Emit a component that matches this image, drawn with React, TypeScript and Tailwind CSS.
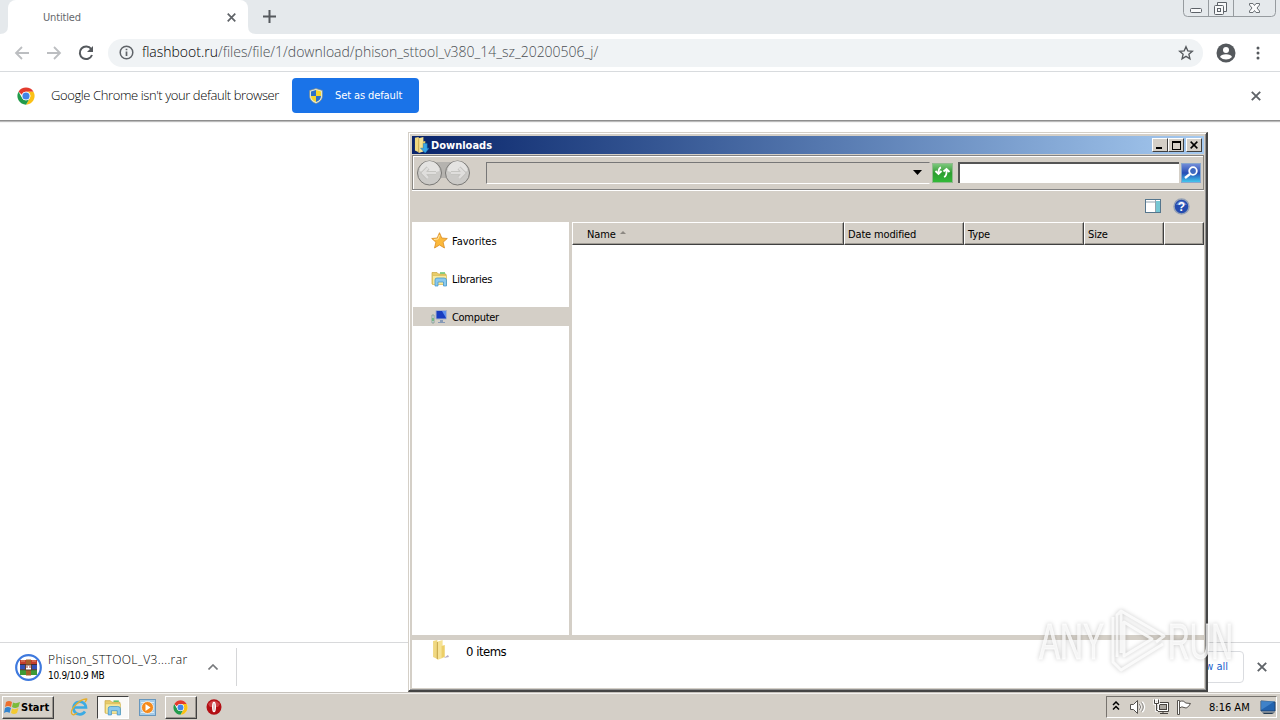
import React from "react";

const ui = "font-['DejaVu_Sans_Condensed','DejaVu_Sans',sans-serif] [font-stretch:condensed]";
const raised = "border border-t-white border-l-white border-r-[#404040] border-b-[#404040] bg-[#d4cfc7]";

function Cross({ size = 10, color = "#5f6368", w = 1.8 }: { size?: number; color?: string; w?: number }) {
  return (
    <svg width={size} height={size} viewBox="0 0 10 10" stroke={color} strokeWidth={w} className="block shrink-0">
      <path d="M.8.8 9.2 9.2M9.2.8.8 9.2" />
    </svg>
  );
}

function ChromeLogo({ size }: { size: number }) {
  return (
    <svg width={size} height={size} viewBox="0 0 48 48" className="block shrink-0">
      <circle cx="24" cy="24" r="23" fill="#fff" />
      <path d="M4.1 12.5A23 23 0 0 1 43.9 12.5H24A11.5 11.5 0 0 0 13.1 20.5Z" fill="#e33b2e" />
      <path d="M43.9 12.5A23 23 0 0 1 24 47L34 29.8A11.5 11.5 0 0 0 24 12.5Z" fill="#fbc116" />
      <path d="M4.1 12.5 14 29.8A11.5 11.5 0 0 0 34 29.8L24 47A23 23 0 0 1 4.1 12.5Z" fill="#229b4b" />
      <circle cx="24" cy="24" r="11.5" fill="#fff" />
      <circle cx="24" cy="24" r="9.5" fill="#4285e8" />
    </svg>
  );
}

function Shield() {
  return (
    <svg width="14" height="16" viewBox="0 0 14 16" className="block shrink-0">
      <path d="M7 .5 13.4 2.5V8C13.4 12 10 14.5 7 15.6 4 14.5.6 12 .6 8V2.5Z" fill="#e8ecd8" stroke="#7f8b86" strokeWidth=".7" />
      <path d="M7 2V8H2V3.4Z" fill="#2d70c9" />
      <path d="M7 2V8H12V3.4Z" fill="#f7d52c" />
      <path d="M2 8H7V14C4 12.7 2 11 2 8Z" fill="#f7d52c" />
      <path d="M12 8H7V14C10 12.7 12 11 12 8Z" fill="#2d70c9" />
    </svg>
  );
}

function Libraries({ size }: { size: number }) {
  return (
    <svg width={size} height={size} viewBox="0 0 17 17" className="block shrink-0">
      <path d="M1 2.5H6L7.5 4H15V14H1Z" fill="#e9cc6a" stroke="#c9a640" strokeWidth=".7" />
      <path d="M1.5 5.5H15.5V14.5H1.5Z" fill="#f8e99d" stroke="#d4b751" strokeWidth=".6" />
      <path d="M9 3H14" stroke="#5bbf61" strokeWidth="1.4" />
      <path d="M4 16V10Q4 8 6 8H13Q15.5 8 15.5 10V16H12.5V12H7V16Z" fill="#8ac9ee" stroke="#3a91c9" strokeWidth=".7" />
    </svg>
  );
}

function Folder({ w, h, arrow }: { w: number; h: number; arrow?: boolean }) {
  return (
    <svg width={w} height={h} viewBox="0 0 16 20" preserveAspectRatio="none" className="block shrink-0">
      <path d="M1 1 5 0V19L1 17Z" fill="#f0d880" />
      <path d="M4 2 10 0V18L5 20Z" fill="#f6e294" />
      <path d="M5 2V19" stroke="#c4a345" />
      <path d="M9 6 12 5V17L9 18Z" fill="#edcf68" />
      {arrow ? (
        <path d="M10 8H14V14H16L12 20 7 14H10Z" fill="#38a5e8" stroke="#1875b9" strokeWidth=".6" />
      ) : (
        <path d="M11 18 15 15 16 17Z" fill="#b5abc7" />
      )}
    </svg>
  );
}

function NavArrow({ flip }: { flip?: boolean }) {
  return (
    <svg width="16" height="14" viewBox="0 0 16 14" fill="none" stroke="#bcbec1" strokeWidth="1.8" className={flip ? "block rotate-180" : "block"}>
      <path d="M15 7H2M8 1 2 7 8 13" />
    </svg>
  );
}

function TabStrip() {
  return (
    <div className="relative flex h-[34px] shrink-0 bg-[#e5e9ec] pl-2">
      <svg width="8" height="8" className="absolute bottom-0 left-0"><path d="M0 8H8V0Q8 8 0 8" fill="#fff" /></svg>
      <svg width="8" height="8" className="absolute bottom-0 left-[248px]"><path d="M0 0V8H8Q0 8 0 0" fill="#fff" /></svg>
      <div className="flex w-[240px] items-center justify-between rounded-t-lg bg-white pl-[35px] pr-[12px]">
        <span className={`${ui} text-[11px] leading-none tracking-[-0.15px] text-[#65686c]`}>Untitled</span>
        <Cross size={9} w={1.9} />
      </div>
      <svg width="13" height="13" viewBox="0 0 13 13" stroke="#55595d" strokeWidth="2" className="ml-[15px] mt-[10px]"><path d="M6.5 0V13M0 6.5H13" /></svg>
      <svg width="93" height="17" viewBox="0 0 93 17" fill="none" stroke="#969b9f" className="absolute right-[4px] top-0">
        <path d="M.5 0V12.5Q.5 16.5 4.5 16.5H88.5Q92.5 16.5 92.5 12.5V0M25.5 0V16M50.5 0V16" />
        <rect x="7.5" y="8.5" width="11" height="4" rx="1" stroke="#5d6268" fill="#f8f9fa" />
        <path d="M34.500 5.500V2.500H43.500V11.500H40.500" stroke="#5d6268" fill="#f8f9fa" />
        <rect x="31.500" y="5.500" width="9" height="9" rx="1" stroke="#5d6268" fill="#f8f9fa" />
        <rect x="34.500" y="8.500" width="3" height="3" stroke="#5d6268" />
        <path d="M66.500 3.500H70L71.500 5.500 73 3.500H76.500V5L74 8 76.500 11V12.500H73L71.500 10.500 70 12.500H66.500V11L69 8 66.500 5Z" stroke="#6b7075" fill="#fafbfc" />
      </svg>
    </div>
  );
}

function Toolbar() {
  return (
    <div className="flex h-[38px] shrink-0 items-center border-b border-[#d8dbde] bg-white pl-[14px]">
      <NavArrow />
      <div className="ml-4"><NavArrow flip /></div>
      <svg width="16" height="16" viewBox="0 0 16 16" fill="none" className="ml-4"><path d="M13.200 4A6.300 6.300 0 1 0 14 10" stroke="#55595d" strokeWidth="2" /><path d="M15 1V7H9Z" fill="#55595d" /></svg>
      <div className="ml-[14px] flex h-[28px] w-[1095px] items-center rounded-full bg-[#f0f3f5] pl-[11px] pr-[9px]">
        <svg width="15" height="15" viewBox="0 0 15 15" fill="none" stroke="#5f6368" strokeWidth="1.500"><circle cx="7.500" cy="7.500" r="6.300" /><path d="M7.500 6.500V11M7.500 3.700V5.200" strokeWidth="1.700" /></svg>
        <span className="ml-[8px] whitespace-nowrap pb-[2px] font-['Open_Sans','Noto_Sans',sans-serif] text-[14px] font-light leading-none tracking-[-0.01px] text-[#4a4e53]"><span className="text-black">flashboot.ru</span>/files/file/1/download/phison_sttool_v380_14_sz_20200506_j/</span>
        <svg width="16" height="16" viewBox="0 0 24 24" fill="none" stroke="#55595d" strokeWidth="2" className="ml-auto"><path d="m12 2.500 2.700 6.300 6.800.6-5.200 4.500 1.600 6.700-5.900-3.600-5.900 3.600 1.600-6.700L2.500 9.400l6.800-.6Z" /></svg>
      </div>
      <svg width="20" height="20" viewBox="0 0 20 20" className="ml-[13px]"><circle cx="10" cy="10" r="9.500" fill="#55595d" /><circle cx="10" cy="7" r="3" fill="#fff" /><path d="M4 14Q5 11.300 10 11.300T16 14Q13.500 16.500 10 16.500T4 14Z" fill="#fff" /></svg>
      <svg width="4" height="14" viewBox="0 0 4 14" fill="#55595d" className="ml-[20px]"><circle cx="2" cy="2" r="1.500" /><circle cx="2" cy="7" r="1.500" /><circle cx="2" cy="12" r="1.500" /></svg>
    </div>
  );
}

function InfoBar() {
  return (
    <div className="flex h-[49px] shrink-0 items-center border-b border-[#8e8e8e] bg-white pb-px pl-[17px] pr-[19px] shadow-[0_1px_1px_#bbb]">
      <ChromeLogo size={18} />
      <span className="ml-4 w-[229px] whitespace-nowrap font-['Open_Sans','Noto_Sans',sans-serif] text-[13px] font-light leading-none tracking-[-0.4px] text-black">Google Chrome isn't your default browser</span>
      <div className="ml-[12px] flex h-[35px] w-[127px] items-center rounded-[4px] bg-[#1a73e8] pl-[17px] text-white">
        <Shield />
        <span className={`${ui} ml-[12px] whitespace-nowrap text-[11px] leading-none tracking-[-0.1px]`}>Set as default</span>
      </div>
      <div className="ml-auto"><Cross size={10} w={1.900} /></div>
    </div>
  );
}

function DownloadShelf() {
  return (
    <div className="flex h-[50px] shrink-0 items-center border-t border-[#d8d9db] bg-white pb-px pl-[15px] pr-[13px]">
      <svg width="27" height="27" viewBox="0 0 27 27" className="shrink-0">
        <circle cx="13.500" cy="13.500" r="12.300" fill="#fff" stroke="#3e79de" strokeWidth="2.200" />
        <path d="M5 6H22V10.500H5Z" fill="#c23d2c" /><path d="M5 11H22V15.500H5Z" fill="#3450b6" /><path d="M5 16H22V21H5Z" fill="#3e9a36" />
        <path d="M6 7H10M17 7H21" stroke="#e59472" /><path d="M5 10.500H22M5 15.700H22" stroke="#432d33" />
        <path d="M11 5.500H16V21.500H11Z" fill="#a65f29" /><path d="M10.500 11H16.500V16H10.500Z" fill="#fff" stroke="#5d4030" /><path d="M12 12V14M15 12V14" stroke="#a33" />
      </svg>
      <div className={`${ui} ml-[6px] flex w-[145px] flex-col gap-[5px] whitespace-nowrap`}>
        <span className="font-['Open_Sans','Noto_Sans',sans-serif] text-[12px] font-light leading-[12px] tracking-[0.37px] text-black [font-stretch:normal]">Phison_STTOOL_V3....rar</span>
        <span className="text-[10px] leading-[10px] tracking-[-0.3px] text-black">10.9/10.9 MB</span>
      </div>
      <svg width="10" height="6" viewBox="0 0 10 6" fill="none" stroke="#77797c" strokeWidth="1.600" className="ml-[15px]"><path d="M.5 5.500 5 1 9.500 5.500" /></svg>
      <div className="ml-[18px] h-[38px] w-px bg-[#d5d6d8]" />
      <div className={`${ui} ml-auto mr-[13px] flex h-[32px] w-[76px] items-center justify-end rounded-[4px] border border-[#dadce0] pr-[15px] text-[11px] text-[#1a63cd]`}>Show all</div>
      <Cross size={10} w={1.900} />
    </div>
  );
}

function Taskbar() {
  return (
    <div className="flex h-7 shrink-0 items-center border-t border-[#c6c2bc] bg-[#d4cfc7] pl-[2px] pr-[3px] pt-px shadow-[inset_0_1px_0_#f4f2ef]">
      <div className={`${raised} flex h-[23px] w-[52px] items-center pl-px shadow-[inset_-1px_-1px_0_#99958e]`}>
        <svg width="17" height="17" viewBox="0 0 17 17" className="shrink-0">
          <path d="M2 3Q5 1 8 3L7 8Q4 6 1 8Z" fill="#ed702e" /><path d="M9 3.500Q12 5 16 3L14.500 8Q11 10 8 8Z" fill="#7bbb39" /><path d="M1 9Q4 7 7 9L5.500 14Q3 12 0 14Z" fill="#3384cf" /><path d="M8 9.500Q11 11 14.500 9L13 14Q10 16 7 14Z" fill="#f3c932" />
        </svg>
        <span className={`${ui} text-[11px] font-bold leading-none text-black`}>Start</span>
      </div>
      <svg width="19" height="19" viewBox="0 0 19 19" className="ml-[16px]" fill="none">
        <path d="M15 13.500A6.300 6.300 0 1 1 16 9.500H4" stroke="#3babe4" strokeWidth="2.600" /><path d="M15 4Q18 0 16 1C10 1-1 12 2 16Q3 18 7 15" stroke="#e5ae2d" strokeWidth="1.300" />
      </svg>
      <div className="ml-[8px] flex h-[23px] w-[32px] items-center justify-center border border-b-white border-l-[#404040] border-r-white border-t-[#404040] bg-[#faf9f7]"><Libraries size={18} /></div>
      <svg width="17" height="17" viewBox="0 0 17 17" className="ml-[10px]"><rect x=".5" y=".5" width="16" height="16" fill="#a5cbe8" stroke="#6797be" /><path d="M2 3.500H15M2 13.500H15" stroke="#d8ecf8" /><circle cx="8.500" cy="8.500" r="6" fill="#f58a1c" stroke="#fff" strokeWidth=".7" /><path d="M6.500 5 11.500 8.500 6.500 12Z" fill="#fff" /></svg>
      <div className={`${raised} ml-[9px] flex h-[23px] w-[32px] items-center justify-center pr-px shadow-[inset_-1px_-1px_0_#99958e]`}><ChromeLogo size={15} /></div>
      <svg width="16" height="16" viewBox="0 0 16 16" className="ml-[9px]"><ellipse cx="8" cy="8" rx="7.500" ry="7.800" fill="#b30f14" /><path d="M2 5Q8-2 14 5L12 8H4Z" fill="#dc555a" opacity=".7" /><ellipse cx="8" cy="8" rx="2" ry="5.300" fill="#fff" /><ellipse cx="8" cy="8" rx=".5" ry="4" fill="#c58a8c" /></svg>
      <div className="ml-auto flex h-[22px] w-[171px] items-center border border-b-white border-l-[#77736e] border-r-white border-t-[#77736e] pl-[5px]">
        <svg width="8" height="10" viewBox="0 0 8 10" fill="none" stroke="#000" strokeWidth="1.500" className="mb-[2px]"><path d="M1 4 4 1 7 4M1 8.500 4 5.500 7 8.500" /></svg>
        <svg width="18" height="16" viewBox="0 0 18 16" fill="none" className="ml-[9px]"><path d="M1.500 5.500H4.500L8.500 1.500V14.500L4.500 10.500H1.500Z" fill="#fff" stroke="#55524f" /><path d="M10.500 5Q12.500 8 10.500 11M13 3Q17 8 13 13" stroke="#fff" strokeWidth="2.400" /><path d="M10.500 5Q12.500 8 10.500 11M12.500 3.500Q16 8 12.500 12.500" stroke="#77736e" /></svg>
        <svg width="17" height="16" viewBox="0 0 17 16" fill="none" stroke="#47433f" className="ml-[6px]"><path d="M4.500 3.500H15.500V12.500H4.500ZM7 14.500H15M10 12.500V14" fill="#fff" /><rect x="6.500" y="5.500" width="7" height="5" fill="#aaa69f" /><path d="M1.500 .5H5.500V4.500H1.500ZM3.500 5V11.500H5" stroke="#fff" strokeWidth="2.500" /><path d="M1.500 .5V4.500H5.500V.5M3.500 5V11.500H5" /></svg>
        <svg width="18" height="17" viewBox="0 0 18 17" className="ml-[5px]" fill="#fff" stroke="#57534e"><path d="M2.500 1.500H4.500V15.500H2.500Z" /><path d="M4.500 2.500Q9 1 10.500 4L15.500 4.500 13.500 7.500Q11 10 9 8.500T4.500 9Z" /></svg>
        <span className={`${ui} ml-[16px] whitespace-nowrap text-[11px] leading-none text-black`}>8:16 AM</span>
        <svg width="16" height="15" viewBox="0 0 16 15" className="ml-[10px] shrink-0"><path d="M1 1 15 2V11H1Z" fill="#2263af" stroke="#204570" /><path d="M1 1H15L1 10Z" fill="#579cde" opacity=".55" /><path d="M2 12.500H15L12 14H4Z" fill="#233b53" /></svg>
      </div>
    </div>
  );
}

function Column({ name, className, sorted }: { name?: string; className: string; sorted?: boolean }) {
  return (
    <div className={`${raised} ${className} flex h-[23px] items-center pt-px text-[11px] leading-none tracking-[-0.15px] shadow-[inset_-1px_-1px_0_#a09c95]`}>
      {name}{sorted && <svg width="6" height="4" className="mb-[2px] ml-[4px]"><path d="M0 3 3 0 6 3Z" fill="#8c8882" /></svg>}
    </div>
  );
}

function Explorer() {
  const places = [
    { name: "Favorites", icon: <svg width="17" height="17" viewBox="0 0 17 17"><path d="M8.500.7 10.800 6 16.300 6.500 12.100 10.200 13.500 16 8.500 13 3.500 16 4.900 10.200.7 6.500 6.200 6Z" fill="#fcb93b" stroke="#d88a22" strokeWidth=".8" /><path d="M8.500 3 7 7 3 7.500" fill="none" stroke="#ffe5a0" /></svg> },
    { name: "Libraries", icon: <Libraries size={17} /> },
    { name: "Computer", icon: <svg width="17" height="16" viewBox="0 0 17 16"><path d="M5 1.500H15.500V10H5Z" fill="#183cc0" stroke="#a8b2cc" /><path d="M11 2 15 2V9Z" fill="#5f90ee" /><path d="M9 11H12V13H14V14H7V13H9Z" fill="#879ab7" /><path d="M1 6H3V14H1Z" fill="#d8e3e7" stroke="#749087" strokeWidth=".7" /><path d="M2 9V12" stroke="#35a94d" /></svg> },
  ];
  return (
    <div className={`${ui} absolute left-[408px] top-[132px] flex h-[560px] w-[800px] flex-col border border-b-2 border-b-[#454545] border-l-[#d4cfc7] border-r-2 border-r-[#454545] border-t-[#d4cfc7] bg-[#d4cfc7] pb-[2px] pl-[3px] pr-[2px] pt-[3px] text-black shadow-[inset_1px_1px_0_#fff,inset_-1px_-1px_0_#929292]`}>
      <div className="flex h-[18px] shrink-0 items-center bg-gradient-to-r from-[#0a246a] to-[#a6caf0] pl-[2px] pr-[2px]">
        <Folder w={15} h={16} arrow />
        <span className="ml-[2px] text-[11px] font-bold leading-none text-white">Downloads</span>
        <div className={`${raised} ml-auto flex h-[14px] w-4 items-end pb-[2px] pl-[3px]`}><div className="h-[2px] w-[6px] bg-black" /></div>
        <div className={`${raised} flex h-[14px] w-4 items-center justify-center`}><div className="h-[9px] w-[9px] border border-t-2 border-black" /></div>
        <div className={`${raised} ml-[2px] flex h-[14px] w-4 items-center justify-center`}><Cross size={8} color="#000" w={1.9} /></div>
      </div>
      <div className="mt-px flex h-[35px] shrink-0 items-center border border-b-[#828282] border-l-[#8b8882] border-r-[#8b8882] border-t-[#828282] pl-[3px] pr-[2px] shadow-[inset_1px_1px_0_#fff,0_1px_0_#fff]">
        <svg width="54" height="28" viewBox="0 0 54 28" fill="none" className="shrink-0">
          <path d="M12 3H42L40 19H15Z" fill="#b5b3af" />
          <circle cx="13.500" cy="14" r="12" fill="#cbcac7" stroke="#797875" /><circle cx="41.500" cy="14" r="12" fill="#cbcac7" stroke="#797875" />
          <path d="M3.500 12A10 10 0 0 1 23.500 12Q13.500 16 3.500 12M31.500 12A10 10 0 0 1 51.500 12Q41.500 16 31.500 12" fill="#e4e3e1" />
          <path d="M20 14H7M12 9 7 14 12 19M35 14H48M43 9 48 14 43 19" stroke="#bdbcb9" strokeWidth="4" /><path d="M20 14H7M12 9 7 14 12 19M35 14H48M43 9 48 14 43 19" stroke="#dfdedc" strokeWidth="2.500" />
        </svg>
        <div className="ml-[16px] flex h-[22px] w-[444px] shrink-0 items-center justify-end border border-b-white border-l-[#777] border-r-transparent border-t-[#777] pr-[7px]"><svg width="9" height="5"><path d="M0 0H9L4.500 5Z" fill="#000" /></svg></div>
        <div className="ml-[2px] flex h-[20px] w-[21px] shrink-0 items-center justify-center border border-[#93ba8f] bg-gradient-to-b from-[#7bc77b] via-[#2c9d30] to-[#32b938]">
          <svg width="17" height="15" viewBox="0 0 17 15" fill="none" stroke="#fff" strokeWidth="1.800"><path d="M7 2.500Q4.500 3 4.500 8M1.500 6 4.500 9 7.500 6M9.500 6.500 12.500 4 15.500 7M12.500 5Q13 11 10 12" /></svg>
        </div>
        <div className="ml-[5px] h-[21px] w-[222px] shrink border-l-2 border-t-2 border-[#555] bg-white" />
        <div className="ml-[2px] flex h-5 w-[20px] shrink-0 items-center justify-center border border-[#88a6cd] bg-gradient-to-b from-[#718bd7] via-[#274db5] to-[#45c6ec]">
          <svg width="16" height="16" viewBox="0 0 16 16" fill="none" stroke="#fff" strokeWidth="1.800"><circle cx="10" cy="6" r="3.800" fill="#3e69c0" /><path d="m7 9-5 4" strokeWidth="2.500" /></svg>
        </div>
      </div>
      <div className="flex h-[32px] shrink-0 items-center justify-end pr-[14px]">
        <svg width="16" height="15" viewBox="0 0 16 15"><rect x=".5" y=".5" width="15" height="13" fill="#fff" stroke="#55768d" /><path d="M1 3H10M10.500 1V13" stroke="#91a3ae" /><path d="M11 2H15V13H11Z" fill="#75c7d3" /></svg>
        <svg width="17" height="17" viewBox="0 0 17 17" className="ml-[12px]"><circle cx="8.500" cy="8.500" r="7.500" fill="#244baf" stroke="#95a1b6" strokeWidth="1.500" /><path d="M3 7Q8-1 14 7Z" fill="#7897dd" opacity=".7" /><text x="8.500" y="12.800" textAnchor="middle" fill="#fff" fontSize="12" fontWeight="bold" fontFamily="Liberation Sans">?</text></svg>
      </div>
      <div className="flex h-[413px] shrink-0">
        <div className="w-[157px] shrink-0 bg-white pl-px pt-[9px]">
          {places.map((p, i) => (
            <div key={p.name} className={`mb-[19px] flex h-[19px] items-center pl-[18px] text-[11px] leading-none ${i === 2 ? "bg-[#d4cfc7]" : ""}`}>
              {p.icon}<span className={i === 0 ? "ml-[4px] pt-[2px]" : "ml-[4px] pt-[2px] tracking-[-0.3px]"}>{p.name}</span>
            </div>
          ))}
        </div>
        <div className="w-[3px] shrink-0 bg-[#d4cfc7]" />
        <div className="flex w-[633px] items-start bg-white">
          <Column name="Name" className="w-[272px] pl-[14px]" sorted />
          <Column name="Date modified" className="w-[120px] pl-[3px]" />
          <Column name="Type" className="w-[120px] pl-[3px]" />
          <Column name="Size" className="w-[80px] pl-[3px]" />
          <Column className="w-[40px]" />
        </div>
      </div>
      <div className="mt-[5px] flex h-[48px] shrink-0 items-start bg-white pl-[20px]">
        <Folder w={17} h={20} /><span className="ml-[17px] mt-[5px] text-[13px] leading-[14px] tracking-[-0.5px]">0 items</span>
      </div>
    </div>
  );
}

function Watermark() {
  return (
    <svg width="204" height="72" viewBox="0 0 204 72" className="pointer-events-none absolute left-[1033px] top-[605px] drop-shadow-[0_0_2px_#0004]">
      <g fill="#fff" fillOpacity=".75" fontFamily="Liberation Sans" fontSize="50" stroke="#fff" strokeOpacity=".7" strokeWidth=".8">
        <text x="6" y="54" textLength="65" lengthAdjust="spacingAndGlyphs">ANY</text>
        <text x="135" y="54" textLength="65" lengthAdjust="spacingAndGlyphs">RUN</text>
      </g>
      <path d="M88 48V6L131 31 123 37M88 6 84 10V52M80 12V57L88 65 130 39M91 17V51L119 34Z" fill="none" stroke="#fff" strokeOpacity=".8" strokeWidth="3" strokeLinejoin="round" />
    </svg>
  );
}

export default function App() {
  return (
    <main className="relative flex h-[720px] w-[1280px] flex-col overflow-hidden bg-white">
      <TabStrip />
      <Toolbar />
      <InfoBar />
      <div className="min-h-0 flex-1" />
      <DownloadShelf />
      <Taskbar />
      <Explorer />
      <Watermark />
    </main>
  );
}
